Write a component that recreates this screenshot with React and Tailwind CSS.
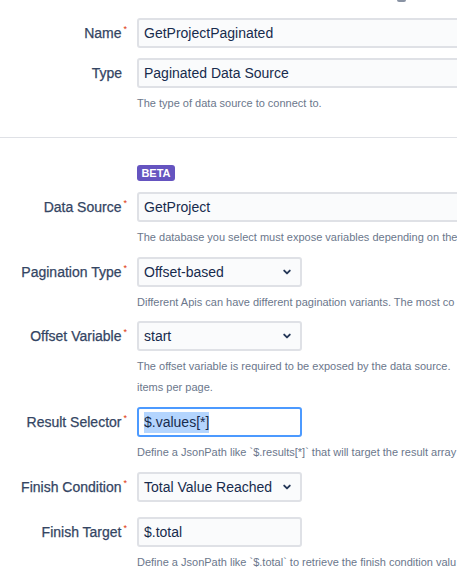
import React from "react";

function Label({ text }) {
  return (
    <div className="w-[128px] shrink-0 pr-[1px] text-right text-[14px] font-normal text-[#344563] whitespace-nowrap [-webkit-text-stroke:0.25px_#344563]">
      {text}
      <span className="ml-[2px] align-top text-[9px] text-[#de350b] [-webkit-text-stroke:0]">*</span>
    </div>
  );
}

function Help({ children }) {
  return (
    <div className="ml-[137px] mt-[5px] text-[11px] leading-[20px] text-[#6b778c] whitespace-nowrap">
      {children}
    </div>
  );
}

function Chevron() {
  return (
    <svg width="10" height="10" viewBox="0 0 10 10" className="shrink-0">
      <path d="M2.2 3.6 L5 6.4 L7.8 3.6" fill="none" stroke="#253858" strokeWidth="1.9" strokeLinecap="round" strokeLinejoin="round" />
    </svg>
  );
}

function SelectBox({ value }) {
  return (
    <div className="flex h-[30px] w-[165px] items-center justify-between rounded-[3px] border-2 border-[#dfe1e6] bg-[#fafbfc] pl-[5px] pr-[8px] text-[14px] text-[#172b4d]">
      <span>{value}</span>
      <Chevron />
    </div>
  );
}

function TextBox({ value, wide = true }) {
  return (
    <div
      className={
        "flex h-[30px] items-center rounded-[3px] border-2 border-[#dfe1e6] bg-[#fafbfc] pl-[5px] text-[14px] text-[#172b4d] whitespace-nowrap " +
        (wide ? "w-[400px]" : "w-[165px]")
      }
    >
      {value}
    </div>
  );
}

function Row({ label, children, className = "", required = true }) {
  return (
    <div className={"flex items-center " + className}>
      {required ? (
        <Label text={label} />
      ) : (
        <div className="w-[128px] shrink-0 pr-[6px] text-right text-[14px] text-[#344563] [-webkit-text-stroke:0.25px_#344563]">{label}</div>
      )}
      <div className="ml-[9px]">{children}</div>
    </div>
  );
}

export default function App() {
  return (
    <div className="relative h-[585px] w-[457px] overflow-hidden bg-white font-['Liberation_Sans',Arial,sans-serif]">
      <div className="absolute left-[397px] top-0 h-[2px] w-[9px] rounded-b bg-[#8993a4]" />

      <div className="pt-[18px]">
        <Row label="Name">
          <TextBox value="GetProjectPaginated" />
        </Row>
        <Row label="Type" required={false} className="mt-[10px]">
          <TextBox value="Paginated Data Source" />
        </Row>
        <Help>The type of data source to connect to.</Help>
      </div>

      <div className="mt-[24px] h-px w-full bg-[#dfe1e6]" />

      <div className="ml-[137px] mt-[27px] flex h-[16px] w-[38px] items-center justify-center rounded-[3px] bg-[#6554c0] text-[11px] font-bold text-white">
        BETA
      </div>

      <Row label="Data Source" className="mt-[11px]">
        <TextBox value="GetProject" />
      </Row>
      <Help>The database you select must expose variables depending on the</Help>

      <Row label="Pagination Type" className="mt-[10px]">
        <SelectBox value="Offset-based" />
      </Row>
      <Help>Different Apis can have different pagination variants. The most co</Help>

      <Row label="Offset Variable" className="mt-[9px]">
        <SelectBox value="start" />
      </Row>
      <div className="ml-[137px] mt-[5px] text-[11px] leading-[21px] text-[#6b778c] whitespace-nowrap">
        <div>The offset variable is required to be exposed by the data source.</div>
        <div>items per page.</div>
      </div>

      <Row label="Result Selector" className="mt-[9px]">
        <div className="flex h-[30px] w-[165px] items-center rounded-[3px] border-2 border-[#4c9aff] bg-white pl-[5px] text-[14px] text-[#172b4d]">
          <span className="bg-[#b4d5fe]">$.values[*]</span>
        </div>
      </Row>
      <Help>Define a JsonPath like `$.results[*]` that will target the result array</Help>

      <Row label="Finish Condition" className="mt-[10px]">
        <SelectBox value="Total Value Reached" />
      </Row>

      <Row label="Finish Target" className="mt-[15px]">
        <TextBox value="$.total" wide={false} />
      </Row>
      <Help>Define a JsonPath like `$.total` to retrieve the finish condition valu</Help>
    </div>
  );
}
